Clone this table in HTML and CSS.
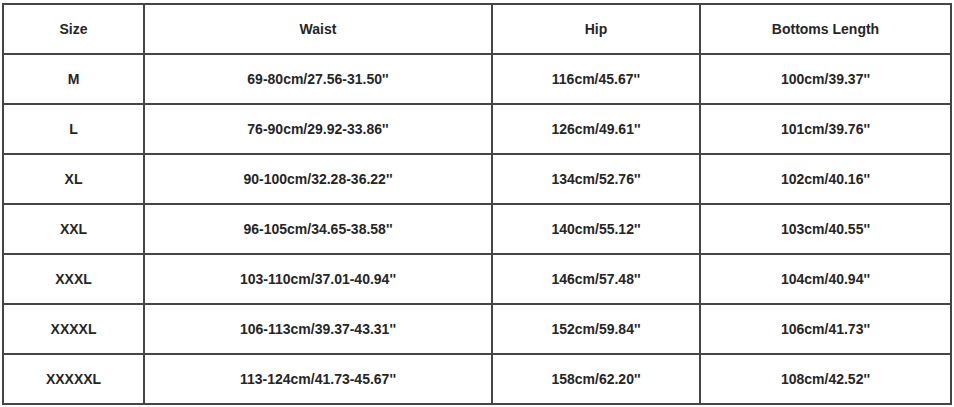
FILE: index.html
```html
<!DOCTYPE html>
<html>
<head>
<meta charset="utf-8">
<link rel="stylesheet" href="styles.css">
</head>
<body>
<table class="size-table">
  <colgroup>
    <col class="c1"><col class="c2"><col class="c3"><col class="c4">
  </colgroup>
  <thead>
    <tr><th>Size</th><th>Waist</th><th>Hip</th><th>Bottoms Length</th></tr>
  </thead>
  <tbody>
    <tr><td>M</td><td>69-80cm/27.56-31.50''</td><td>116cm/45.67''</td><td>100cm/39.37''</td></tr>
    <tr><td>L</td><td>76-90cm/29.92-33.86''</td><td>126cm/49.61''</td><td>101cm/39.76''</td></tr>
    <tr><td>XL</td><td>90-100cm/32.28-36.22''</td><td>134cm/52.76''</td><td>102cm/40.16''</td></tr>
    <tr><td>XXL</td><td>96-105cm/34.65-38.58''</td><td>140cm/55.12''</td><td>103cm/40.55''</td></tr>
    <tr><td>XXXL</td><td>103-110cm/37.01-40.94''</td><td>146cm/57.48''</td><td>104cm/40.94''</td></tr>
    <tr><td>XXXXL</td><td>106-113cm/39.37-43.31''</td><td>152cm/59.84''</td><td>106cm/41.73''</td></tr>
    <tr><td>XXXXXL</td><td>113-124cm/41.73-45.67''</td><td>158cm/62.20''</td><td>108cm/42.52''</td></tr>
  </tbody>
</table>
</body>
</html>
```
FILE: styles.css
```css
html, body {
  margin: 0;
  padding: 0;
  background: #fff;
}
body {
  padding: 3px 0 0 2px;
  font-family: "Liberation Sans", Arial, sans-serif;
}
.size-table {
  border-collapse: collapse;
  table-layout: fixed;
  width: 950px;
}
.c1 { width: 141px; }
.c2 { width: 348px; }
.c3 { width: 208px; }
.c4 { width: 251px; }
.size-table th,
.size-table td {
  border: 2px solid #454545;
  height: 48px;
  padding: 0;
  text-align: center;
  vertical-align: middle;
  font-size: 14px;
  font-weight: bold;
  color: #262626;
}
.size-table th {
  font-weight: bold;
}
```
